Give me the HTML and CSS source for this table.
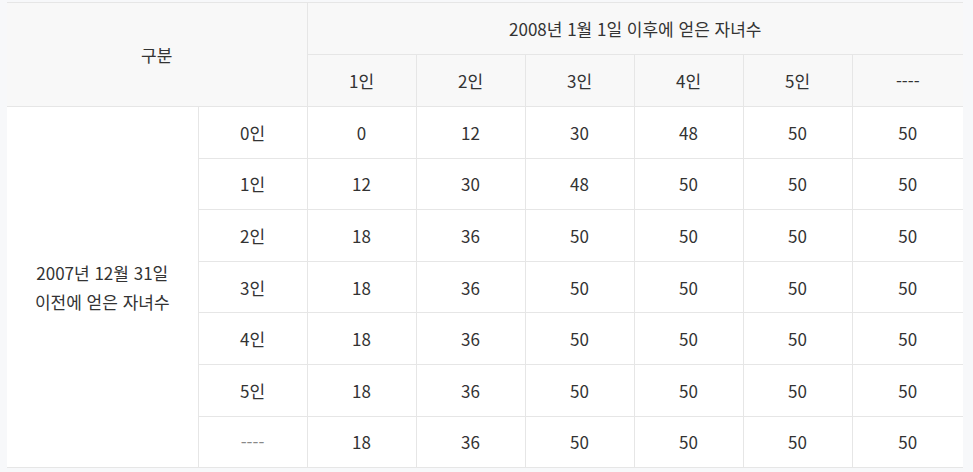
FILE: index.html
```html
<!DOCTYPE html>
<html lang="ko">
<head>
<meta charset="utf-8">
<link rel="stylesheet" href="styles.css">
</head>
<body>
<div class="wrap">
<table class="tbl">
<colgroup>
<col class="c0"><col class="cn"><col class="cn"><col class="cn"><col class="cn"><col class="cn"><col class="cn"><col class="cl">
</colgroup>
<thead>
<tr class="hr">
<th colspan="2" rowspan="2">구분</th>
<th colspan="6">2008년 1월 1일 이후에 얻은 자녀수</th>
</tr>
<tr class="hr">
<th>1인</th><th>2인</th><th>3인</th><th>4인</th><th>5인</th><th>----</th>
</tr>
</thead>
<tbody>
<tr><td rowspan="7" class="lead">2007년 12월 31일<br>이전에 얻은 자녀수</td><td>0인</td><td>0</td><td>12</td><td>30</td><td>48</td><td>50</td><td>50</td></tr>
<tr><td>1인</td><td>12</td><td>30</td><td>48</td><td>50</td><td>50</td><td>50</td></tr>
<tr><td>2인</td><td>18</td><td>36</td><td>50</td><td>50</td><td>50</td><td>50</td></tr>
<tr><td>3인</td><td>18</td><td>36</td><td>50</td><td>50</td><td>50</td><td>50</td></tr>
<tr><td>4인</td><td>18</td><td>36</td><td>50</td><td>50</td><td>50</td><td>50</td></tr>
<tr><td>5인</td><td>18</td><td>36</td><td>50</td><td>50</td><td>50</td><td>50</td></tr>
<tr><td class="dash">----</td><td>18</td><td>36</td><td>50</td><td>50</td><td>50</td><td>50</td></tr>
</tbody>
</table>
</div>
</body>
</html>
```
FILE: styles.css
```css
html, body {
  margin: 0;
  padding: 0;
  background: #f7f8fa;
}
.wrap {
  padding: 2px 10px 0 7px;
}
.tbl {
  width: 956px;
  border-collapse: collapse;
  table-layout: fixed;
  background: #fff;
  font-family: "Noto Sans CJK KR", "Noto Sans", sans-serif;
  font-size: 17px;
  color: #333;
  border-top: 1px solid #e3e3e3;
  border-bottom: 1px solid #e3e3e3;
}
.c0 { width: 191px; }
.cn { width: 109px; }
.cl { width: 111px; }
.tbl th, .tbl td {
  border: 1px solid #e6e6e6;
  text-align: center;
  vertical-align: middle;
  padding: 0;
  font-weight: 400;
}
.tbl tr > :first-child { border-left: none; }
.tbl tr > :last-child { border-right: none; }
.tbl tbody tr:not(:first-child) > td:first-child { border-left: 1px solid #e6e6e6; }
.tbl th {
  background: #f8f8f8;
  height: 51px;
}
.tbl td {
  height: 50.6px;
}
.lead {
  line-height: 29px;
}
.dash {
  color: #888;
}
```
